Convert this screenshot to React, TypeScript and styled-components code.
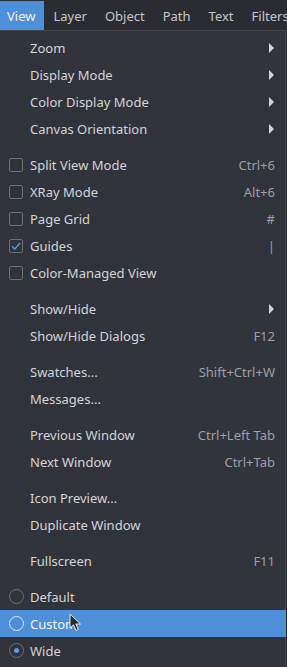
import React from "react";
import styled, { createGlobalStyle, css } from "styled-components";

const Global = createGlobalStyle`
  html, body { margin: 0; padding: 0; background: #2a2c31; }
  body { font-family: "Noto Sans", "DejaVu Sans", sans-serif; font-size: 13px; }
  #root { width: 287px; height: 667px; overflow: hidden; }
`;

const Page = styled.div`
  width: 287px;
  height: 667px;
  background: #2a2c31;
  display: flex;
  flex-direction: column;
`;

const MenuBar = styled.div`
  display: flex;
  height: 30px;
  padding-top: 1px;
  box-sizing: border-box;
  background: #2a2c31;
  white-space: nowrap;
  overflow: hidden;
`;

const BarItem = styled.div<{ $active?: boolean }>`
  display: flex;
  align-items: center;
  padding: 0 9px;
  color: #c4c6cb;
  &:first-child {
    padding-left: 7px;
  }
  ${(p) =>
    p.$active &&
    css`
      background: #4e8fd9;
      color: #eef3fa;
    `}
`;

const Menu = styled.div`
  width: 286px;
  box-sizing: border-box;
  background: #31333a;
  border-top: 1px solid #45474d;
  border-right: 1px solid #45474d;
  padding: 3px 0 3px 0;
  display: flex;
  flex-direction: column;
`;

const Item = styled.div<{ $hover?: boolean }>`
  position: relative;
  display: flex;
  align-items: center;
  height: 27px;
  padding: 0 10px 0 9px;
  color: #d2d4d8;
  ${(p) =>
    p.$hover &&
    css`
      background: #4e8fd9;
      color: #f3f6fb;
      margin-right: -1px;
    `}
`;

const Indicator = styled.div`
  width: 14px;
  height: 14px;
  margin-right: 7px;
  flex: none;
  display: flex;
  align-items: center;
  justify-content: center;
`;

const CheckBox = styled.div`
  width: 14px;
  height: 14px;
  box-sizing: border-box;
  border: 1px solid #6c6f76;
  border-radius: 2px;
  display: flex;
  align-items: center;
  justify-content: center;
`;

const Radio = styled.div<{ $light?: boolean }>`
  width: 15px;
  height: 15px;
  box-sizing: border-box;
  border: 1px solid ${(p) => (p.$light ? "#dfe9f6" : "#6c6f76")};
  border-radius: 50%;
  display: flex;
  align-items: center;
  justify-content: center;
  flex: none;
`;

const Dot = styled.div`
  width: 5px;
  height: 5px;
  border-radius: 50%;
  background: #5b9be0;
`;

const Label = styled.span`
  flex: 1;
  white-space: nowrap;
`;

const Shortcut = styled.span`
  color: #9c9fa5;
  white-space: nowrap;
`;

const Arrow = styled.span`
  width: 0;
  height: 0;
  border-top: 5px solid transparent;
  border-bottom: 5px solid transparent;
  border-left: 5px solid #d2d4d8;
  margin-right: 1px;
`;

const Separator = styled.div`
  height: 9px;
`;

const Cursor = styled.svg`
  position: absolute;
  left: 69px;
  top: 3px;
`;

type Entry =
  | { sep: true }
  | {
      label: string;
      shortcut?: string;
      sub?: boolean;
      check?: boolean;
      checked?: boolean;
      radio?: boolean;
      selected?: boolean;
      hover?: boolean;
    };

const entries: Entry[] = [
  { label: "Zoom", sub: true },
  { label: "Display Mode", sub: true },
  { label: "Color Display Mode", sub: true },
  { label: "Canvas Orientation", sub: true },
  { sep: true },
  { label: "Split View Mode", shortcut: "Ctrl+6", check: true },
  { label: "XRay Mode", shortcut: "Alt+6", check: true },
  { label: "Page Grid", shortcut: "#", check: true },
  { label: "Guides", shortcut: "|", check: true, checked: true },
  { label: "Color-Managed View", check: true },
  { sep: true },
  { label: "Show/Hide", sub: true },
  { label: "Show/Hide Dialogs", shortcut: "F12" },
  { sep: true },
  { label: "Swatches...", shortcut: "Shift+Ctrl+W" },
  { label: "Messages..." },
  { sep: true },
  { label: "Previous Window", shortcut: "Ctrl+Left Tab" },
  { label: "Next Window", shortcut: "Ctrl+Tab" },
  { sep: true },
  { label: "Icon Preview..." },
  { label: "Duplicate Window" },
  { sep: true },
  { label: "Fullscreen", shortcut: "F11" },
  { sep: true },
  { label: "Default", radio: true },
  { label: "Custom", radio: true, hover: true },
  { label: "Wide", radio: true, selected: true },
];

const CheckMark = () => (
  <svg width="10" height="8" viewBox="0 0 10 8">
    <path d="M1 4.2 L3.8 7 L9 1" fill="none" stroke="#5b9be0" strokeWidth="1.3" />
  </svg>
);

export default function App() {
  return (
    <>
      <Global />
      <Page>
        <MenuBar>
          <BarItem $active>View</BarItem>
          <BarItem>Layer</BarItem>
          <BarItem>Object</BarItem>
          <BarItem>Path</BarItem>
          <BarItem>Text</BarItem>
          <BarItem>Filters</BarItem>
        </MenuBar>
        <Menu>
          {entries.map((e, i) => {
            if ("sep" in e) return <Separator key={i} />;
            return (
              <Item key={i} $hover={e.hover}>
                <Indicator>
                  {e.check && <CheckBox>{e.checked && <CheckMark />}</CheckBox>}
                  {e.radio && (
                    <Radio $light={e.hover}>{e.selected && <Dot />}</Radio>
                  )}
                </Indicator>
                <Label>{e.label}</Label>
                {e.shortcut && <Shortcut>{e.shortcut}</Shortcut>}
                {e.sub && <Arrow />}
                {e.hover && (
                  <Cursor width="14" height="20" viewBox="0 0 14 20">
                    <path
                      d="M1 1 L1 15 L4.5 11.8 L7 17.5 L9.3 16.5 L6.9 11 L11.5 11 Z"
                      fill="#2b2d31"
                      stroke="#e8e8e8"
                      strokeWidth="1"
                      strokeLinejoin="round"
                    />
                  </Cursor>
                )}
              </Item>
            );
          })}
        </Menu>
      </Page>
    </>
  );
}
